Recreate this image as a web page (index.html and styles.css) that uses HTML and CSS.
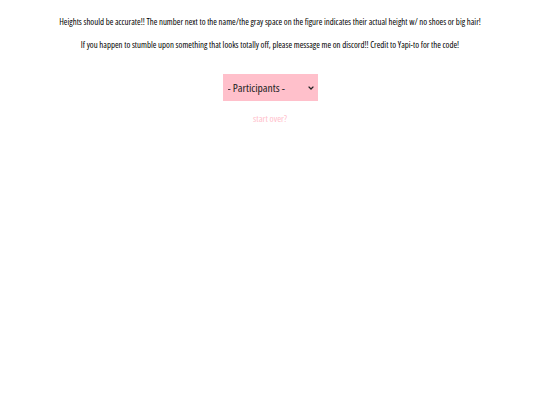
FILE: index.html
```html
<!DOCTYPE html>
<html lang="en">
<head>
  <meta charset="UTF-8" />
  <meta name="viewport" content="width=device-width, initial-scale=1.0"/>
  <title>Height Chart</title>
  <link rel="stylesheet" href="styles.css">
</head>
<body>

  <p class="note">Heights should be accurate!! The number next to the name/the gray space on the figure indicates their actual height w/ no shoes or big hair!</p>
  <p class="note">If you happen to stumble upon something that looks totally off, please message me on discord!! Credit to Yapi-to for the code!</p>

  <div class="picker">
    <select id="participants">
      <option>- Participants -</option>
    </select>
  </div>

  <a class="restart" href="#">start over?</a>

</body>
</html>
```

FILE: styles.css
```css
body {
  font-family: "Open Sans", sans-serif;
  font-stretch: condensed;
  font-weight: 400;
  text-align: center;
  background-color: #ffffff;
  color: #000;
  margin: 0;
  padding-top: 16px;
}

.note {
  font-size: 8.8px;
  line-height: 12px;
  margin: 0 0 11px;
}

.picker {
  margin-top: 23px;
}

/* dropdown with a small drawn chevron */
select {
  appearance: none;
  font-family: inherit;
  font-stretch: condensed;
  font-weight: 400;
  font-size: 11.5px;
  color: #222;
  width: 95px;
  height: 27px;
  background-color: #ffc0cb;
  background-image: url("data:image/svg+xml,%3Csvg xmlns='http://www.w3.org/2000/svg' width='6' height='4' viewBox='0 0 6 4'%3E%3Cpath d='M0.6 0.6 L3 3 L5.4 0.6' fill='none' stroke='%23222' stroke-width='1.3'/%3E%3C/svg%3E");
  background-repeat: no-repeat;
  background-position: right 4px center;
  border: none;
  border-radius: 0;
  padding: 0 5px;
}

.restart {
  display: inline-block;
  margin-top: 11px;
  font-size: 9.5px;
  color: #ffc0cb;
  text-decoration: none;
}
```
